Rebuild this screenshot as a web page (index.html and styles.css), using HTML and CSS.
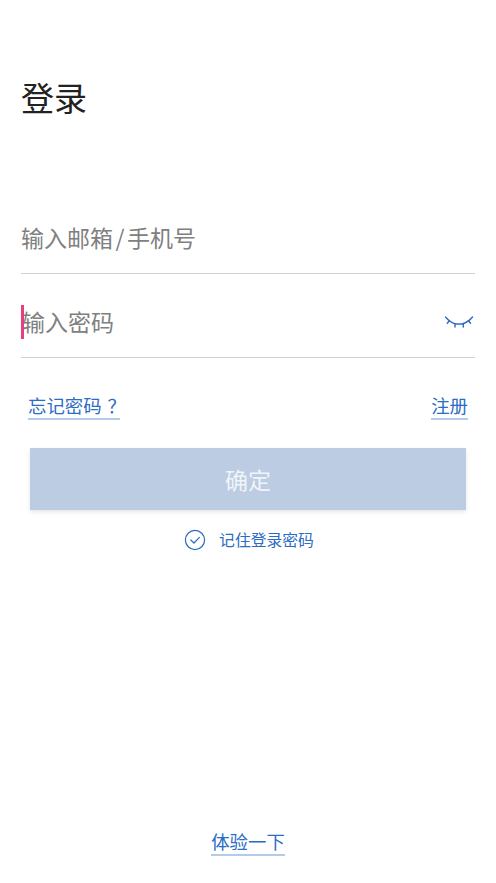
FILE: index.html
```html
<!DOCTYPE html>
<html lang="zh-CN">
<head>
    <meta charset="UTF-8">
    <meta name="viewport" content="width=device-width, initial-scale=1.0">
    <title>登录</title>
    <link rel="stylesheet" href="styles.css">
</head>
<body>
    <section class="page">
        <h1 class="title">登录</h1>
        <div class="field field-first">
            <span class="placeholder">输入邮箱<span class="slash">/</span>手机号</span>
        </div>
        <div class="field field-second">
            <span class="caret"></span>
            <span class="placeholder">输入密码</span>
            <svg class="eye" width="30" height="14" viewBox="0 0 30 14" fill="none" stroke="#2b6cc4" stroke-width="1.4" stroke-linecap="round">
                <path d="M0.5 3C3 6 6 9 11 10H17C21 9 25 6 27.5 3"/>
                <path d="M4.3 6.7L2.3 9.3M10 10V13M18.3 10V13M23.5 6.7L25.5 9.3"/>
            </svg>
        </div>
        <div class="links">
            <a class="link">忘记密码<span class="mark">？</span></a>
            <a class="link">注册</a>
        </div>
        <button class="submit" type="button">确定</button>
        <div class="remember">
            <svg class="check" width="22" height="22" viewBox="0 0 22 22" fill="none" stroke="#2b6cc4" stroke-width="1.2">
                <circle cx="11" cy="11" r="9.6"/>
                <path d="M6.8 11L10 14L15.4 8.4" stroke-linecap="round" stroke-linejoin="round"/>
            </svg>
            <span>记住登录密码</span>
        </div>
        <div class="spacer"></div>
        <div class="trial">
            <a class="link">体验一下</a>
        </div>
    </section>
</body>
</html>
```

FILE: styles.css
```css
* {
    margin: 0;
    padding: 0;
    box-sizing: border-box;
}

body {
    background: #fff;
    font-family: "Noto Sans CJK SC", "Liberation Sans", sans-serif;
}

.page {
    display: flex;
    flex-direction: column;
    width: 496px;
    height: 883px;
    padding: 0 21px;
    overflow: hidden;
}

.title {
    margin-top: 73px;
    height: 48px;
    line-height: 48px;
    font-size: 33px;
    font-weight: 400;
    color: #222;
}

.field {
    display: flex;
    align-items: center;
    height: 51px;
    border-bottom: 1px solid #d2d2d2;
    position: relative;
}

.field-first {
    margin-top: 102px;
}

.field-second {
    margin-top: 33px;
}

.placeholder {
    font-size: 23px;
    color: #808080;
    line-height: 34px;
}

.slash {
    padding: 0 2.5px;
}

.field-first .placeholder {
    margin-top: -22px;
}

.field-second .placeholder {
    margin-top: -23px;
    margin-left: 1px;
}

.caret {
    position: absolute;
    left: 0;
    top: -2px;
    width: 3px;
    height: 34px;
    background: #e83e7c;
}

.eye {
    margin-left: auto;
    margin-top: -22px;
}

.links {
    display: flex;
    justify-content: space-between;
    padding: 0 7px;
    margin-top: 35px;
}

.link {
    display: block;
    font-size: 18.4px;
    line-height: 25px;
    color: #2b6cc4;
    border-bottom: 2px solid #b4cbe9;
}

.mark {
    display: inline-block;
    padding-left: 6px;
    margin-right: -6px;
}

.submit {
    display: block;
    width: 436px;
    height: 62px;
    margin: 28px 0 0 9px;
    border: none;
    background: #bbcce3;
    box-shadow: 0 2px 4px rgba(0, 0, 0, 0.1);
    color: #f1f4f9;
    font-family: inherit;
    font-size: 23px;
}

.remember {
    display: flex;
    align-items: center;
    justify-content: center;
    gap: 13px;
    margin-top: 18px;
    margin-left: 2px;
    height: 22px;
    color: #2b6cc4;
    font-size: 15.8px;
}

.check {
    margin-top: 2px;
}

.spacer {
    flex: 1;
}

.trial {
    display: flex;
    justify-content: center;
    margin-bottom: 27px;
}
```
